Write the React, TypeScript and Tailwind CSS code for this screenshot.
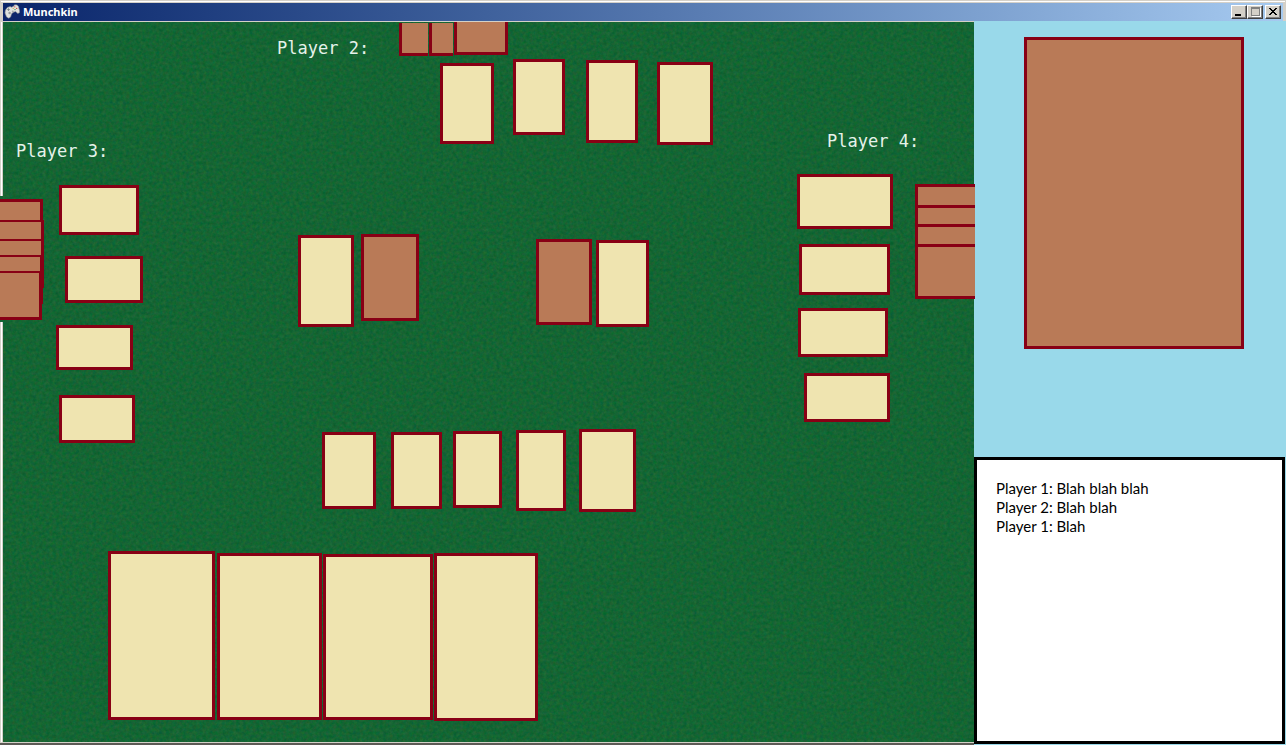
import type { ReactNode } from 'react';

const FACE_UP = 'absolute border-[3px] border-[#880015] bg-[#efe4b0]';
const FACE_DOWN = 'absolute border-[#880015] bg-[#b97a57]';
const LABEL =
  "absolute whitespace-nowrap font-['DejaVu_Sans_Mono',monospace] text-[17px] leading-6 font-normal text-[#e6f2ea]";

const messages = [
  { id: 1, author: 'Player 1', text: 'Blah blah blah' },
  { id: 2, author: 'Player 2', text: 'Blah blah' },
  { id: 3, author: 'Player 1', text: 'Blah' },
];

function Cards({ base, places }: { base: string; places: string[] }) {
  return (
    <>
      {places.map((place) => (
        <div key={place} className={`${base} ${place}`} />
      ))}
    </>
  );
}

function Felt() {
  return (
    <svg className="absolute inset-y-0 right-0 left-[3px] h-full w-[calc(100%-3px)]" aria-hidden="true">
      <defs>
        <filter id="felt" x="0" y="0" width="100%" height="100%" colorInterpolationFilters="sRGB">
          <feTurbulence type="fractalNoise" baseFrequency="0.3" numOctaves={3} seed={4} stitchTiles="stitch" />
          <feColorMatrix
            type="matrix"
            values="0.18 0 0 0 -0.01  0 0.1 0 0 0.346  0 0 0.1 0 0.15  0 0 0 0 1"
          />
        </filter>
      </defs>
      <rect width="100%" height="100%" fill="#156435" />
      <rect width="100%" height="100%" filter="url(#felt)" />
    </svg>
  );
}

function GamepadIcon() {
  return (
    <svg className="h-4 w-4" viewBox="0 0 16 16" aria-hidden="true">
      <path
        d="M1.4 6.2 3.4 3.4l2.8-.8 1.2.6 1.8-.8 1.6-1.6 2.2.2 1.5 1.4 1.1 4.6-.2 1.8-1.6.6-2.2-1.8-2.2.6-1.8 1.6-1 3.2-1.8 1.2L2.6 13 1 9z"
        fill="#dfe2df"
        stroke="#8d9193"
        strokeWidth=".6"
      />
      <path d="M3.2 5.6h2.6M4.5 4.3v2.6" stroke="#7b8183" strokeWidth=".9" />
      <circle cx="5.6" cy="9" r="1.2" fill="#959b9d" />
      <circle cx="8.8" cy="7.4" r="1" fill="#a5aaac" />
      <circle cx="10.8" cy="2.8" r=".6" fill="#d63b2a" />
      <circle cx="12.7" cy="4.4" r=".6" fill="#d63b2a" />
      <circle cx="11" cy="5.6" r=".7" fill="#3c9a4e" />
      <circle cx="9.2" cy="4.4" r=".6" fill="#c9a94a" />
    </svg>
  );
}

function CaptionButton({ label, children }: { label: string; children: ReactNode }) {
  return (
    <button
      type="button"
      aria-label={label}
      className="flex h-[14px] w-4 items-center justify-center border border-t-white border-r-[#404040] border-b-[#404040] border-l-white bg-[#d4d0c8] shadow-[inset_-1px_-1px_0_#808080]"
    >
      <svg className="h-3 w-[14px]" viewBox="0 0 14 12" shapeRendering="crispEdges" aria-hidden="true">
        {children}
      </svg>
    </button>
  );
}

function TitleBar() {
  return (
    <header className="border-t border-[#d4d0c8] bg-[#d4d0c8] pr-[3px] pl-[3px]">
      <div className="-mx-0.5 h-0.5 border-t border-white" />
      <div className="flex h-[18px] items-center bg-linear-to-r from-[#0a246a] to-[#a6caf0] pr-0.5 pl-px">
        <GamepadIcon />
        <h1 className="ml-[3px] font-['Noto_Sans','Open_Sans',sans-serif] text-[11px] leading-4 font-bold text-white">
          Munchkin
        </h1>
        <div className="ml-auto flex">
          <CaptionButton label="Minimize">
            <rect x="3" y="8" width="6" height="2" fill="#000" />
          </CaptionButton>
          <CaptionButton label="Maximize">
            <path d="M3 1h9v9H3z M4 3v6h7V3z" fill="#808080" fillRule="evenodd" />
            <path d="M12 2h1v9H4v-1h8z" fill="#fff" />
          </CaptionButton>
          <div className="ml-0.5 flex">
            <CaptionButton label="Close">
              <path
                d="M3 2h2v1h1v1h2V3h1V2h2v1h-1v1H9v1H8v1h1v1h1v1h1v1H9V8H8V7H6v1H5v1H3V8h1V7h1V6h1V5H5V4H4V3H3z"
                fill="#000"
              />
            </CaptionButton>
          </div>
        </div>
      </div>
    </header>
  );
}

function Table() {
  return (
    <main className="relative min-w-0 flex-1 border-t border-b-[3px] border-t-[#d4d0c8] border-b-[#5c5a55] bg-[linear-gradient(to_right,#d4d0c8_0_1px,#fff_1px_2px,#d4d0c8_2px_3px)]">
      <Felt />
      <div className="absolute inset-x-0 bottom-0 h-px translate-y-px bg-[#d4d0c8]" />

      <section aria-label="Player 2">
        <h2 className={`${LABEL} top-[14px] left-[277px]`}>Player 2:</h2>
        <Cards
          base={FACE_DOWN}
          places={[
            'left-[399px] top-px h-[33px] w-[29px] border-b-[3px] border-l-[3px]',
            'left-[429px] top-px h-[33px] w-[24px] border-b-[3px] border-l-[3px]',
            'left-[454px] top-0 h-[33px] w-[54px] border-x-[3px] border-b-[3px]',
          ]}
        />
        <Cards
          base={FACE_UP}
          places={[
            'left-[440px] top-[41px] h-[81px] w-[54px]',
            'left-[513px] top-[37px] h-[76px] w-[52px]',
            'left-[586px] top-[38px] h-[83px] w-[52px]',
            'left-[657px] top-[40px] h-[83px] w-[56px]',
          ]}
        />
      </section>

      <section aria-label="Player 3">
        <h2 className={`${LABEL} top-[117px] left-[16px]`}>Player 3:</h2>
        <div className="absolute top-[174px] left-0 h-[126px] w-[3px] bg-[#156435]" />
        <Cards
          base={FACE_DOWN}
          places={[
            'left-0 top-[177px] h-[49px] w-[43px] border-y-[3px] border-r-[3px]',
            'left-0 top-[198px] h-[49px] w-[44px] border-t-2 border-r-[3px] border-b-[3px]',
            'left-0 top-[217px] h-[49px] w-[44px] border-t-2 border-r-[3px] border-b-[3px]',
            'left-0 top-[233px] h-[49px] w-[43px] border-t-2 border-r-[3px] border-b-[3px]',
            'left-0 top-[249px] h-[49px] w-[42px] border-t-2 border-r-[3px] border-b-[3px]',
          ]}
        />
        <Cards
          base={FACE_UP}
          places={[
            'left-[59px] top-[163px] h-[50px] w-[80px]',
            'left-[65px] top-[234px] h-[47px] w-[78px]',
            'left-[56px] top-[303px] h-[45px] w-[77px]',
            'left-[59px] top-[373px] h-[48px] w-[76px]',
          ]}
        />
      </section>

      <section aria-label="Player 4">
        <h2 className={`${LABEL} top-[107px] left-[827px]`}>Player 4:</h2>
        <Cards
          base={FACE_DOWN}
          places={[
            'left-[915px] top-[162px] h-[55px] w-[60px] border-y-[3px] border-l-[3px]',
            'left-[915px] top-[183px] h-[55px] w-[60px] border-y-[3px] border-l-[3px]',
            'left-[915px] top-[202px] h-[55px] w-[60px] border-y-[3px] border-l-[3px]',
            'left-[915px] top-[222px] h-[55px] w-[60px] border-y-[3px] border-l-[3px]',
          ]}
        />
        <Cards
          base={FACE_UP}
          places={[
            'left-[797px] top-[152px] h-[55px] w-[96px]',
            'left-[799px] top-[222px] h-[51px] w-[91px]',
            'left-[798px] top-[286px] h-[49px] w-[90px]',
            'left-[804px] top-[351px] h-[49px] w-[86px]',
          ]}
        />
      </section>

      <section aria-label="Draw and discard piles">
        <Cards
          base={`${FACE_DOWN} border-[3px]`}
          places={[
            'left-[361px] top-[212px] h-[87px] w-[58px]',
            'left-[536px] top-[217px] h-[86px] w-[56px]',
          ]}
        />
        <Cards
          base={FACE_UP}
          places={[
            'left-[298px] top-[213px] h-[92px] w-[56px]',
            'left-[596px] top-[218px] h-[87px] w-[53px]',
          ]}
        />
      </section>

      <section aria-label="Player 1">
        <Cards
          base={FACE_UP}
          places={[
            'left-[322px] top-[410px] h-[77px] w-[54px]',
            'left-[391px] top-[410px] h-[77px] w-[51px]',
            'left-[453px] top-[409px] h-[77px] w-[49px]',
            'left-[516px] top-[408px] h-[81px] w-[50px]',
            'left-[579px] top-[407px] h-[83px] w-[57px]',
            'left-[108px] top-[529px] h-[169px] w-[107px]',
            'left-[217px] top-[531px] h-[167px] w-[105px]',
            'left-[323px] top-[532px] h-[166px] w-[110px]',
            'left-[434px] top-[531px] h-[168px] w-[104px]',
          ]}
        />
      </section>
    </main>
  );
}

function Sidebar() {
  return (
    <aside className="grid w-[312px] shrink-0 grid-rows-[436px_1fr] bg-[#99d9ea] pr-px pb-px">
      <section aria-label="Card preview" className="pt-4 pl-[50px]">
        <div className="h-[312px] w-[220px] border-[3px] border-[#880015] bg-[#b97a57]" />
      </section>
      <section aria-label="Chat" className="border-[3px] border-black bg-white px-[19px] py-[19px]">
        <ul className="font-[Lato,sans-serif] text-[15px] leading-[19px] text-black">
          {messages.map((message) => (
            <li key={message.id}>
              {message.author}: {message.text}
            </li>
          ))}
        </ul>
      </section>
    </aside>
  );
}

export default function App() {
  return (
    <div className="flex min-h-screen flex-col bg-[#d4d0c8]">
      <TitleBar />
      <div className="flex flex-1">
        <Table />
        <Sidebar />
      </div>
    </div>
  );
}
